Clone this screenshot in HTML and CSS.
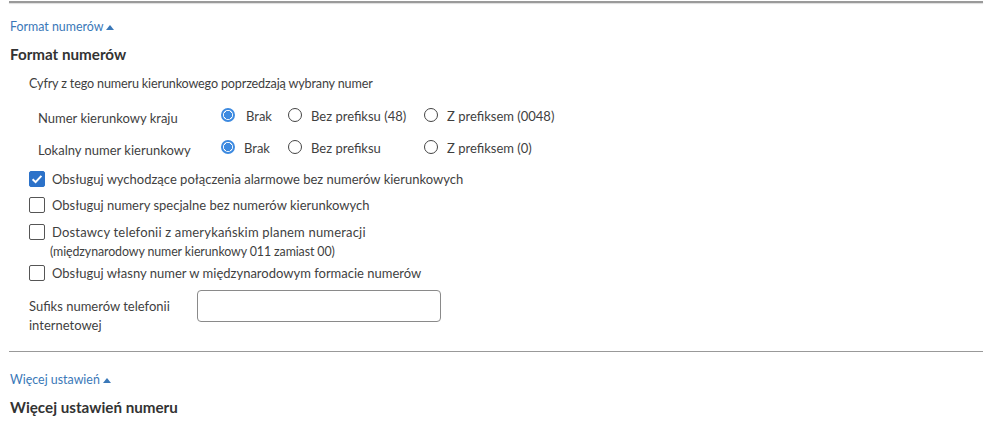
FILE: index.html
```html
<!DOCTYPE html>
<html lang="pl">
<head>
<meta charset="utf-8">
<link rel="stylesheet" href="styles.css">
</head>
<body>
<div class="page">
  <div class="toprule"></div>
  <a class="toggle" href="#">Format numerów<span class="tri"></span></a>
  <h2 class="heading">Format numerów</h2>
  <div class="section">
    <p class="intro">Cyfry z tego numeru kierunkowego poprzedzają wybrany numer</p>
    <div class="radiorow">
      <span class="rlabel">Numer kierunkowy kraju</span>
      <label class="ropt o1"><span class="radio checked"></span><span class="rtext t1">Brak</span></label>
      <label class="ropt o2"><span class="radio"></span><span class="rtext">Bez prefiksu (48)</span></label>
      <label class="ropt o3"><span class="radio"></span><span class="rtext">Z prefiksem (0048)</span></label>
    </div>
    <div class="radiorow r2">
      <span class="rlabel">Lokalny numer kierunkowy</span>
      <label class="ropt o1"><span class="radio checked"></span><span class="rtext">Brak</span></label>
      <label class="ropt o2"><span class="radio"></span><span class="rtext">Bez prefiksu</span></label>
      <label class="ropt o3"><span class="radio"></span><span class="rtext">Z prefiksem (0)</span></label>
    </div>
    <label class="check"><span class="box checked"><svg viewBox="0 0 16 16" width="16" height="16"><path d="M3.6 8.2 L6.6 11.1 L12.4 4.9" fill="none" stroke="#fff" stroke-width="2"/></svg></span><span>Obsługuj wychodzące połączenia alarmowe bez numerów kierunkowych</span></label>
    <label class="check"><span class="box"></span><span>Obsługuj numery specjalne bez numerów kierunkowych</span></label>
    <label class="check c3"><span class="box"></span><span class="wide">Dostawcy telefonii z amerykańskim planem numeracji</span></label>
    <p class="sub">(międzynarodowy numer kierunkowy 011 zamiast 00)</p>
    <label class="check c4"><span class="box"></span><span>Obsługuj własny numer w międzynarodowym formacie numerów</span></label>
    <div class="field">
      <span class="flabel">Sufiks numerów telefonii internetowej</span>
      <span class="input"></span>
    </div>
  </div>
  <div class="rule"></div>
  <a class="toggle t2" href="#">Więcej ustawień<span class="tri"></span></a>
  <h2 class="heading h2b">Więcej ustawień numeru</h2>
</div>
</body>
</html>
```
FILE: styles.css
```css
* { box-sizing: border-box; }
html, body { margin: 0; padding: 0; background: #fff; }
body {
  font-family: Lato, "Noto Sans", sans-serif;
  font-size: 13px;
  color: #3f3f3f;
  width: 998px;
  height: 424px;
  overflow: hidden;
}
.page {
  margin-left: 9px;
  width: 974px;
  display: flex;
  flex-direction: column;
  align-items: flex-start;
}
.toprule {
  align-self: stretch;
  height: 2px;
  margin-top: 1px;
  background: #9a9a9a;
  box-shadow: 0 1px 1px #ddd;
}
.toggle {
  margin-top: 15px;
  margin-left: 1px;
  color: #3a78b8;
  font-size: 12.4px;
  text-decoration: none;
  line-height: 18px;
  display: flex;
  align-items: center;
}
.tri {
  display: inline-block;
  width: 0; height: 0;
  margin-left: 3px;
  border-left: 4px solid transparent;
  border-right: 4px solid transparent;
  border-bottom: 5px solid #3a78b8;
}
.heading {
  margin: 8px 0 0 1px;
  font-size: 15.2px;
  font-weight: 700;
  color: #333;
  line-height: 20px;
}
.section {
  padding-left: 20px;
  display: flex;
  flex-direction: column;
  align-items: flex-start;
}
.intro {
  margin: 11px 0 0;
  font-size: 12.6px;
  letter-spacing: -0.15px;
  line-height: 18px;
}
.radiorow {
  display: flex;
  align-items: center;
  margin-top: 13px;
  height: 20px;
  padding-left: 9px;
}
.radiorow.r2 { margin-top: 12px; }
.rlabel { width: 183px; position: relative; top: 2px; }
.ropt { display: flex; align-items: center; }
.o1 { width: 67px; }
.o2 { width: 136px; }
.radio {
  width: 14px; height: 14px;
  border: 1.6px solid #444;
  border-radius: 50%;
  margin-right: 9px;
  display: inline-block;
  flex: none;
  position: relative;
  top: -1px;
}
.radio.checked {
  border: 2px solid #3d8ae0;
  background: radial-gradient(circle, #3d8ae0 0 3.8px, #fff 4.3px);
}
.t1 { margin-left: 2px; }
.check {
  display: flex;
  align-items: center;
  line-height: 18px;
  margin-top: 8px;
}
.radiorow.r2 + .check { margin-top: 12px; }
.box {
  width: 16px; height: 16px;
  border: 1.5px solid #555;
  border-radius: 2px;
  margin-right: 7px;
  flex: none;
  display: inline-flex;
}
.box.checked { background: #2c72c9; border-color: #2c72c9; }
.box.checked svg { margin: -1.5px; }
.c3 { margin-top: 9px; }
.wide { letter-spacing: 0.18px; }
.sub { margin: 2px 0 0 21px; font-size: 12.4px; letter-spacing: -0.1px; line-height: 18px; }
.c4 { margin-top: 3px; }
.field {
  display: flex;
  align-items: flex-start;
  margin-top: 7px;
}
.flabel {
  width: 168px;
  line-height: 19px;
  margin-top: 8px;
}
.input {
  display: block;
  width: 244px;
  height: 32px;
  margin-top: 1px;
  border: 1px solid #8a8a8a;
  border-radius: 4px;
}
.rule {
  align-self: stretch;
  height: 1px;
  background: #999;
  margin-top: 16px;
}
.t2 { margin-top: 19px; }
.h2b { margin-top: 8px; }
```
